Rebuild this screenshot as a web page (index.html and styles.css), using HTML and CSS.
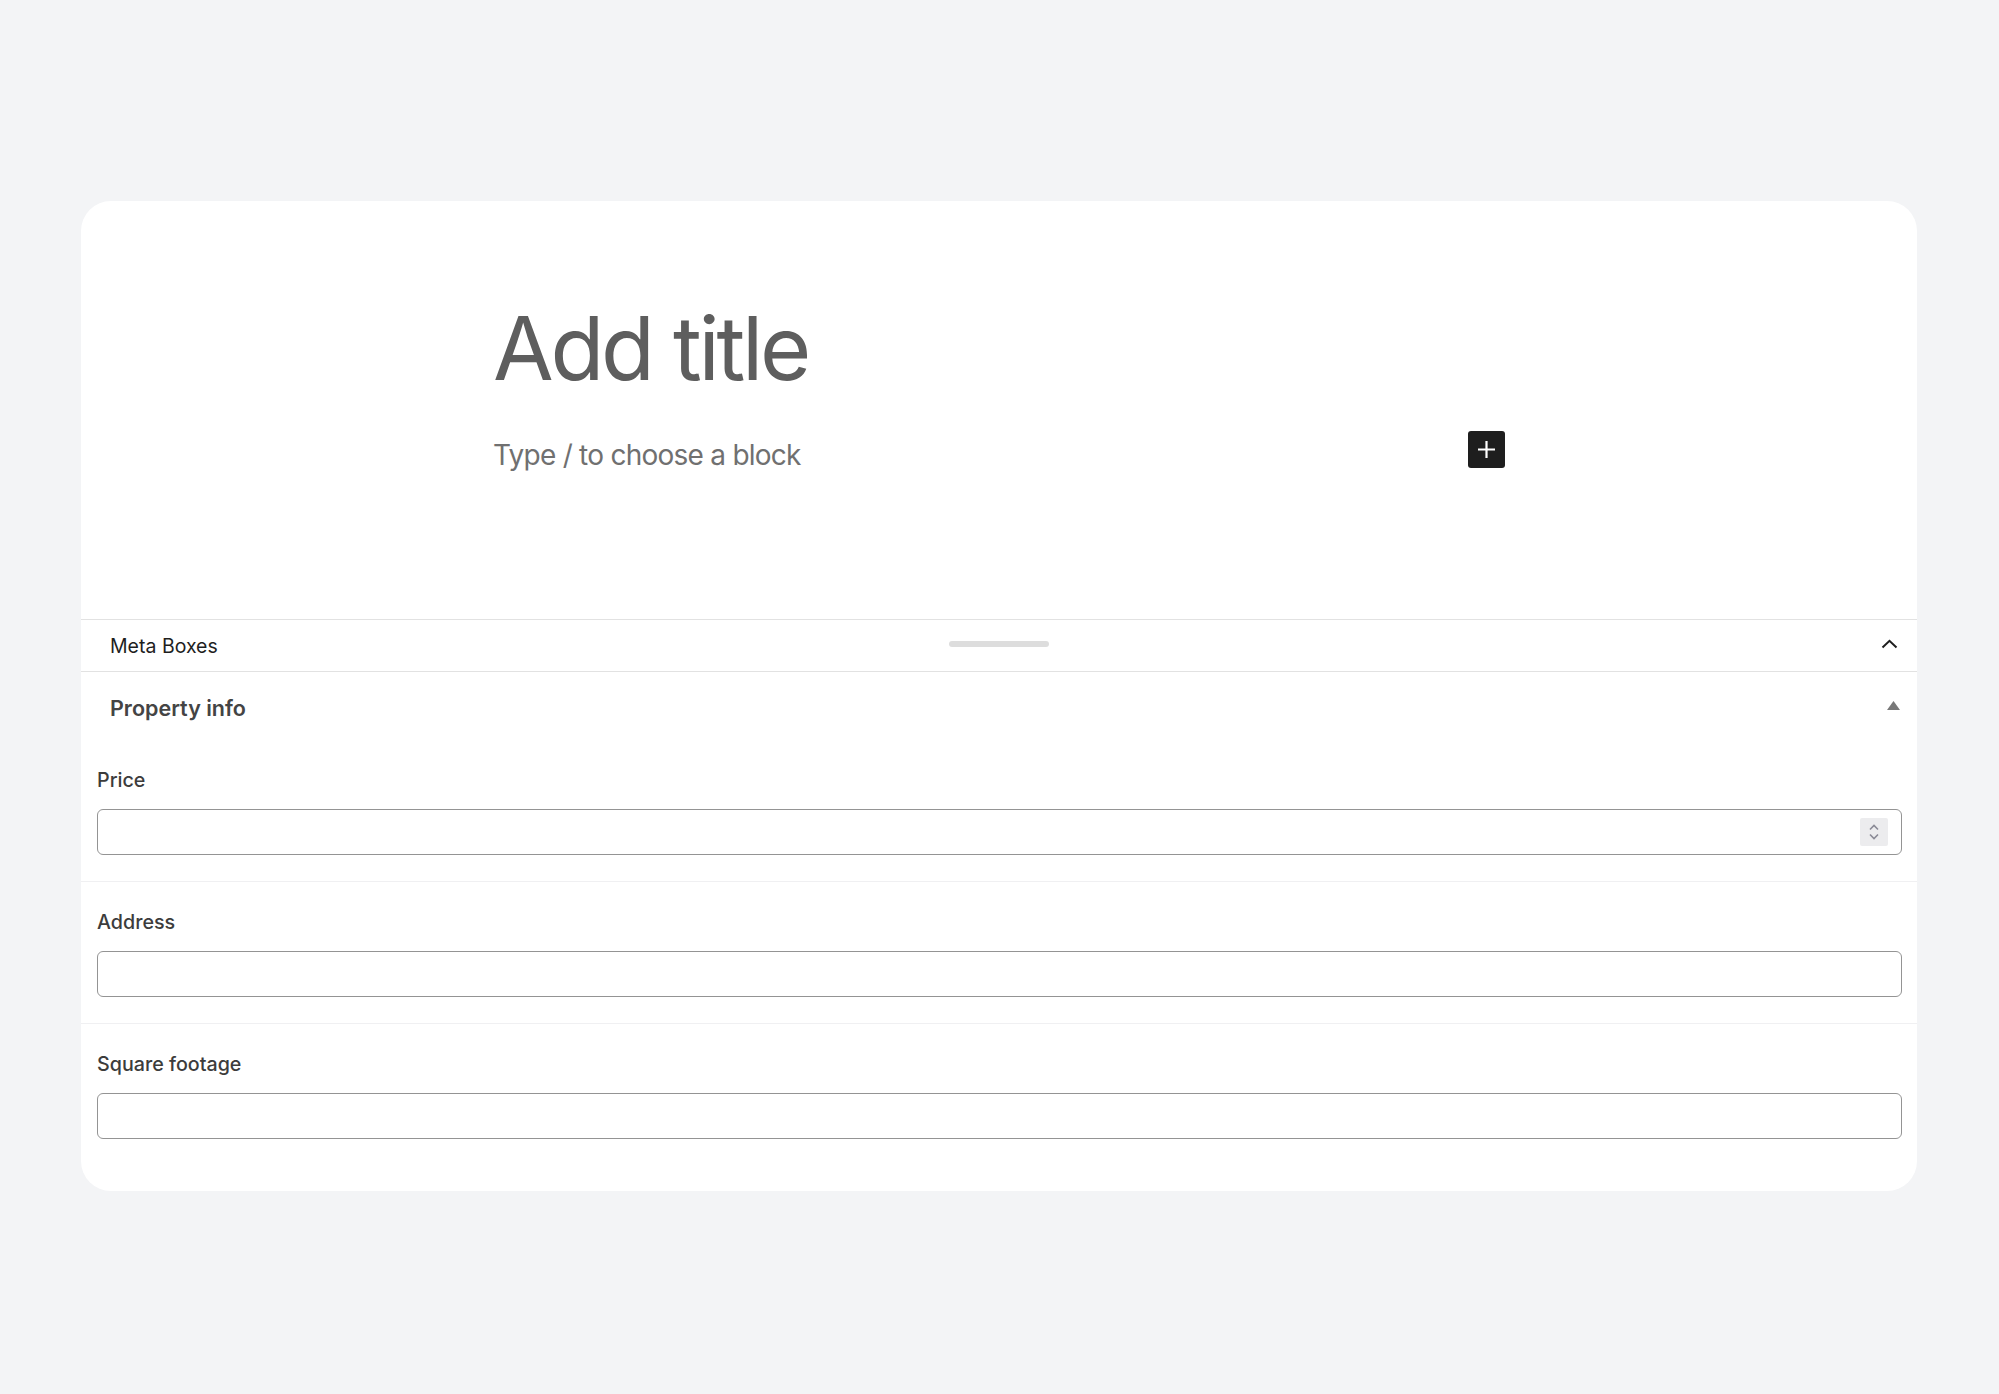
FILE: index.html
```html
<!DOCTYPE html>
<html lang="en">
<head>
  <meta charset="UTF-8" />
  <title>Edit Property</title>
  <link rel="stylesheet" href="styles.css">
</head>
<body>

<div class="editor">
  <div class="canvas">
    <div class="writing">
      <h1 class="post-title">Add title</h1>
      <div class="block-row">
        <p class="block-placeholder">Type / to choose a block</p>
        <button class="inserter" aria-label="Add block">
          <svg width="19" height="19" viewBox="0 0 19 19"><path d="M9.5 1v17M1 9.5h17" stroke="#fff" stroke-width="2.2" fill="none"/></svg>
        </button>
      </div>
    </div>
  </div>

  <div class="meta-header">
    <span class="meta-title">Meta Boxes</span>
    <span class="drag-handle"></span>
    <svg class="meta-toggle" width="17" height="10" viewBox="0 0 17 10"><path d="M1.5 8.5L8.5 1.8L15.5 8.5" stroke="#1e1e1e" stroke-width="2" fill="none"/></svg>
  </div>

  <div class="postbox">
    <div class="postbox-head">
      <h2>Property info</h2>
      <svg class="postbox-toggle" width="13" height="9" viewBox="0 0 13 9"><polygon points="6.5,0 13,9 0,9" fill="#787878"/></svg>
    </div>

    <div class="field">
      <label for="price">Price</label>
      <div class="input-box">
        <input type="text" id="price" />
        <span class="spinner">
          <svg width="12" height="22" viewBox="0 0 12 22"><path d="M2 8.5l4-4 4 4M2 13.5l4 4 4-4" stroke="#8a8a96" stroke-width="1.6" fill="none"/></svg>
        </span>
      </div>
    </div>

    <div class="field">
      <label for="address">Address</label>
      <div class="input-box">
        <input type="text" id="address" />
      </div>
    </div>

    <div class="field">
      <label for="sqft">Square footage</label>
      <div class="input-box">
        <input type="text" id="sqft" />
      </div>
    </div>
  </div>
</div>

</body>
</html>
```

FILE: styles.css
```css
body {
  font-family: Inter, "Liberation Sans", Arial, sans-serif;
  background: #f3f4f6;
  margin: 0;
  padding: 201px 82px 0 81px;
}

.editor {
  background: white;
  border-radius: 30px;
  padding-bottom: 26px;
}

.canvas {
  padding: 94px 0 143px 0;
}

.writing {
  max-width: 1012px;
  margin: 0 auto;
}

.post-title {
  margin: 0;
  font-size: 88px;
  line-height: 106px;
  font-weight: 400;
  color: #5e5e5e;
  letter-spacing: -3.3px;
}

.block-row {
  display: flex;
  justify-content: space-between;
  align-items: flex-start;
  margin-top: 33px;
}

.block-placeholder {
  margin: 0;
  font-size: 28px;
  line-height: 42px;
  color: #707070;
  letter-spacing: -0.75px;
}

.inserter {
  width: 37px;
  height: 37px;
  margin-top: -3px;
  padding: 0;
  border: none;
  border-radius: 3px;
  background: #1e1e1e;
  display: flex;
  align-items: center;
  justify-content: center;
  cursor: pointer;
}

.meta-header {
  display: grid;
  grid-template-columns: 1fr 100px 1fr;
  align-items: center;
  height: 51px;
  padding: 0 19px;
  border-top: 1px solid #e2e2e2;
  border-bottom: 1px solid #e2e2e2;
}

.meta-title {
  margin-left: 10px;
  font-size: 19.5px;
  color: #1e1e1e;
}

.drag-handle {
  height: 6px;
  margin-bottom: 4px;
  border-radius: 3px;
  background: #dddddd;
}

.meta-toggle {
  justify-self: end;
  margin-bottom: 4px;
}

.postbox-head {
  display: flex;
  justify-content: space-between;
  align-items: center;
  padding: 23px 17px 19px 29px;
}

.postbox-head h2 {
  margin: 0;
  font-size: 21.5px;
  line-height: 26px;
  font-weight: 600;
  color: #444;
}

.postbox-toggle {
  margin-bottom: 6px;
}

.field {
  padding: 28px 15px 26px 16px;
  border-top: 1px solid #f0f0f2;
}

.postbox-head + .field {
  border-top: none;
}

.field label {
  display: block;
  font-size: 19.7px;
  line-height: 24px;
  font-weight: 500;
  color: #3c3c3c;
  margin-bottom: 17px;
}

.input-box {
  display: flex;
  align-items: center;
  height: 46px;
  box-sizing: border-box;
  border: 1.5px solid #949494;
  border-radius: 6px;
}

.input-box input {
  flex: 1;
  height: 100%;
  border: none;
  outline: none;
  background: transparent;
  padding: 0 12px;
  font-size: 18px;
}

.spinner {
  width: 28px;
  height: 28px;
  margin-right: 13px;
  background: #ececee;
  border-radius: 2px;
  display: flex;
  align-items: center;
  justify-content: center;
}
```
